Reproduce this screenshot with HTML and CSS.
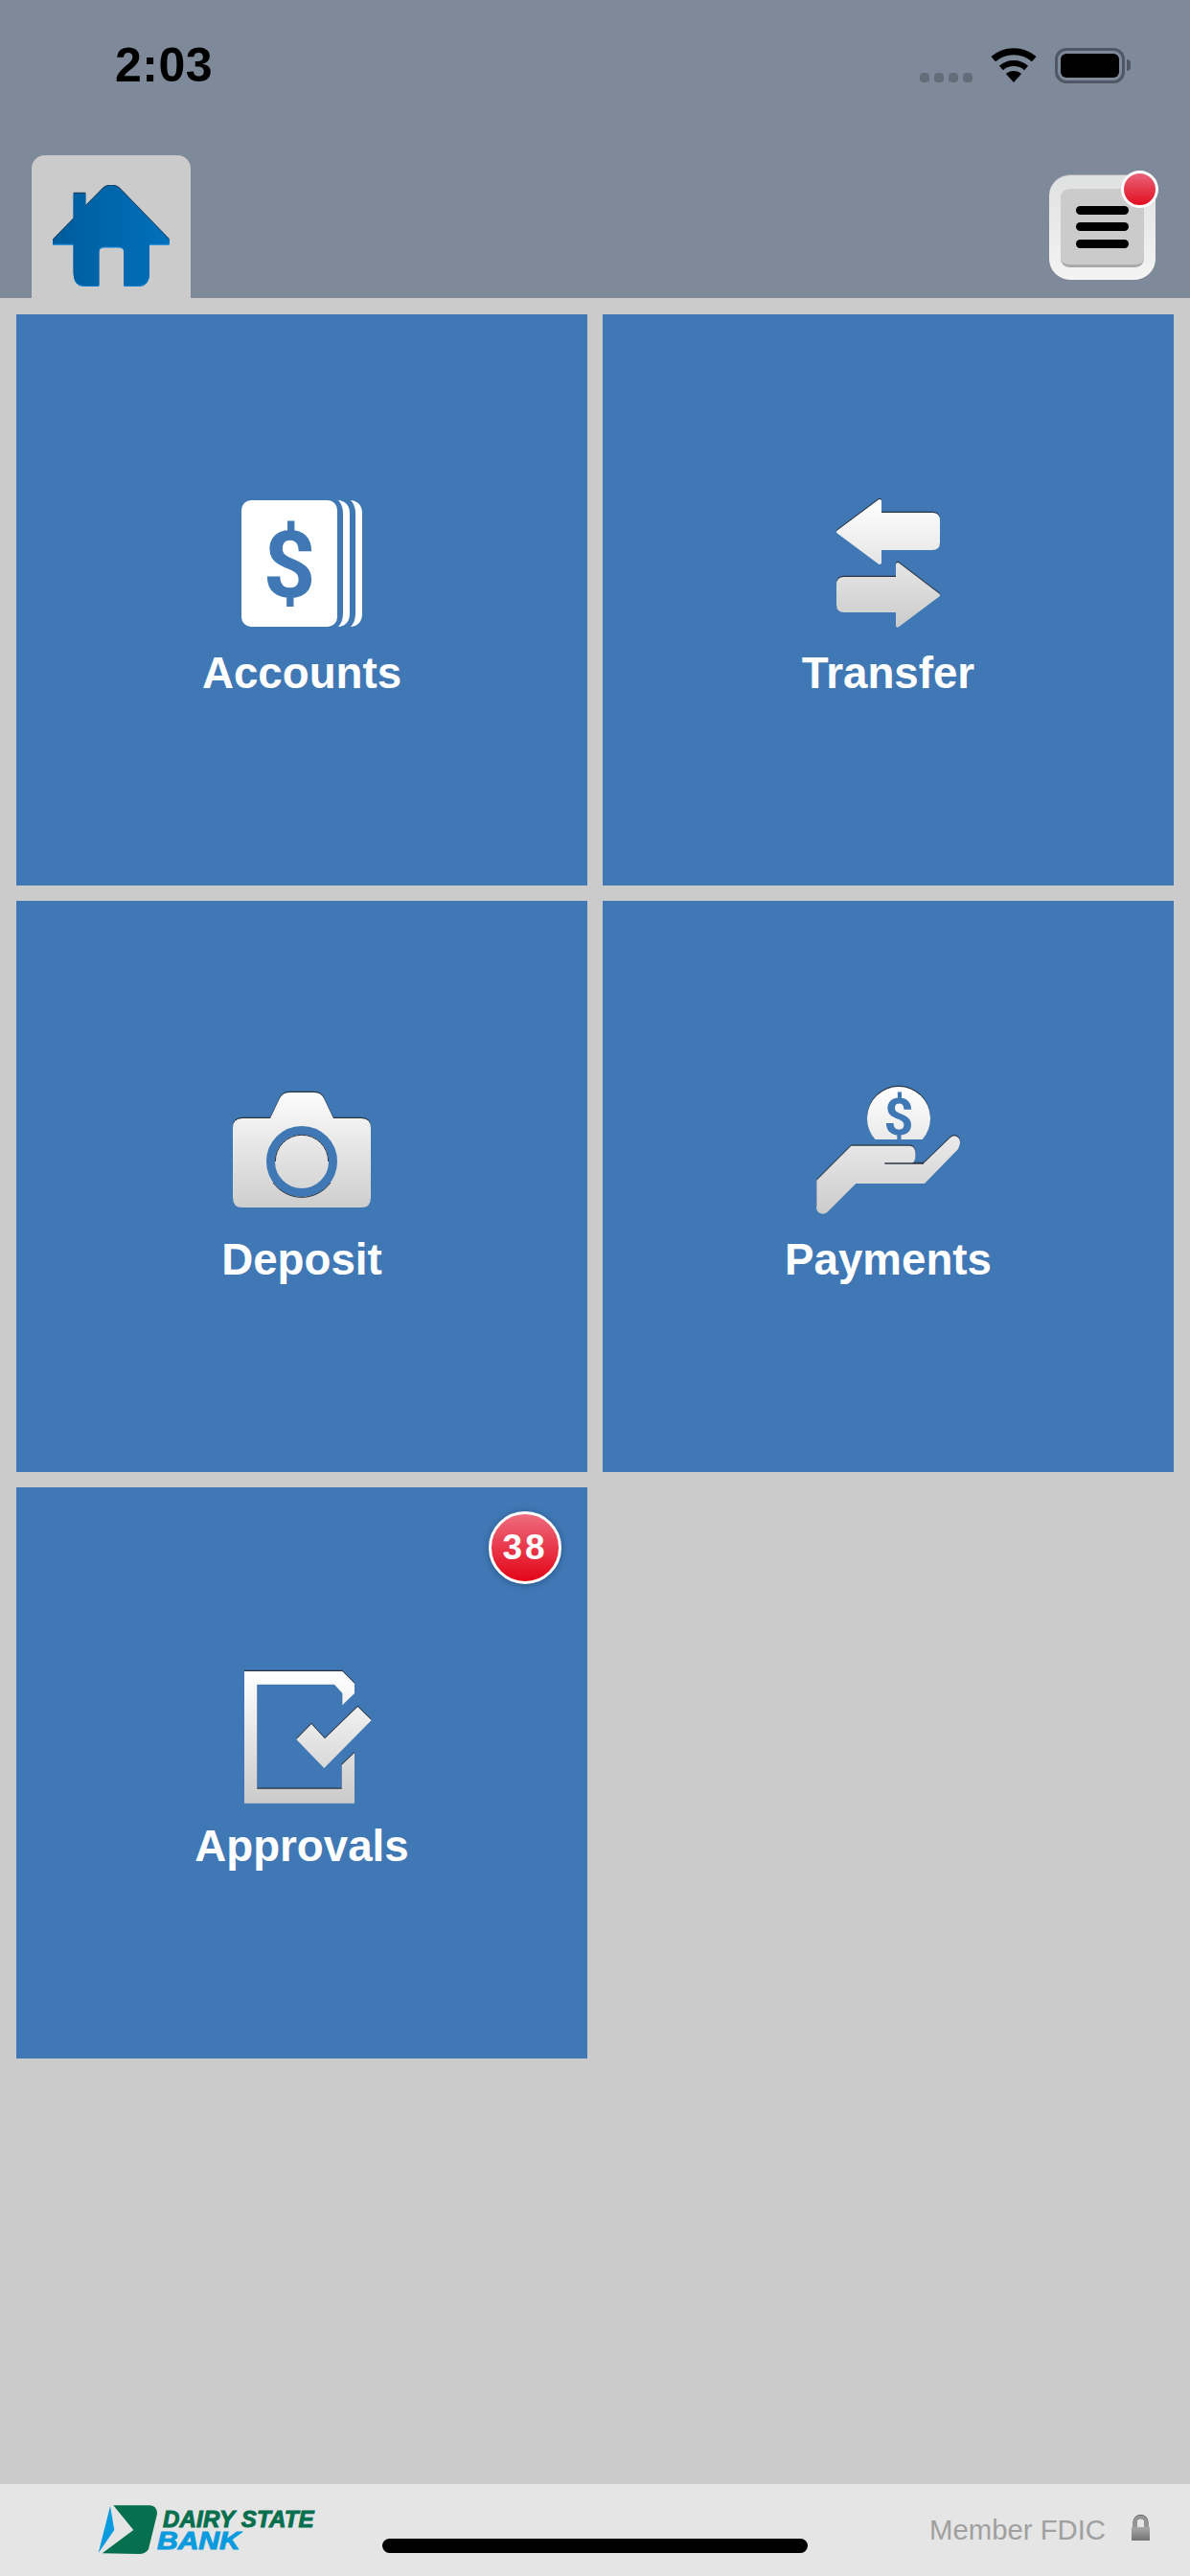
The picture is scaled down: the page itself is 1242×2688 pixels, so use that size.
FILE: index.html
```html
<!DOCTYPE html>
<html lang="en">
<head>
  <meta charset="UTF-8">
  <meta name="viewport" content="width=device-width, initial-scale=1.0">
  <title>Dairy State Bank</title>
  <link rel="stylesheet" href="styles.css">
</head>
<body>
  <header class="top">
    <div class="status">
      <span class="time">2:03</span>
      <div class="status-icons">
        <div class="signal"><i></i><i></i><i></i><i></i></div>
        <svg class="wifi" width="48" height="37" viewBox="0 0 48 37">
          <path d="M2.7 11.7A32.5 32.5 0 0 1 45.3 11.7" fill="none" stroke="#000" stroke-width="7"/>
          <path d="M10.9 21A20 20 0 0 1 37.1 21" fill="none" stroke="#000" stroke-width="6"/>
          <path d="M24 36L15.9 27.1A12 12 0 0 1 32.1 27.1Z" fill="#000"/>
        </svg>
        <div class="battery"><div class="battery-level"></div></div>
      </div>
    </div>
    <nav class="nav">
      <div class="home-tab">
        <svg width="122" height="106" viewBox="0 0 122 106">
          <defs>
            <linearGradient id="homeBlue" x1="0" y1="0" x2="1" y2="0">
              <stop offset="0" stop-color="#005c9c"/>
              <stop offset="1" stop-color="#0070bb"/>
            </linearGradient>
            <path id="house" d="M0 57.5L21.7 35.3V8.7H34.3V22L52.3 3.7Q61 -3 70 3.7L121.7 57V61.5H101V92Q101 105 88.3 105H74.3V69Q74.3 64.3 68.3 64.3H54.3Q48.3 64.3 48.3 69V105H34.3Q21.7 105 21.7 92V61.5H0Z"/>
          </defs>
          <use href="#house" fill="#1c3550" y="-1"/>
          <use href="#house" fill="#0a7fd2" y="1.2"/>
          <use href="#house" fill="url(#homeBlue)"/>
        </svg>
      </div>
      <button class="menu-btn">
        <span class="menu-inner"><i></i><i></i><i></i></span>
        <span class="menu-dot"></span>
      </button>
    </nav>
  </header>

  <main class="tiles">
    <a class="tile">
      <svg class="tile-icon" width="160" height="160" viewBox="0 0 160 160">
        <path d="M118 6H119Q130 8 130 20V124Q130 136 119 138H118Q123 133 123 124V20Q123 11 118 6Z" fill="#fff"/>
        <path d="M131 6H132Q143 8 143 20V124Q143 136 132 138H131Q136 133 136 124V20Q136 11 131 6Z" fill="#fff"/>
        <rect x="17" y="6" width="100" height="132" rx="10" fill="#fff"/>
        <text class="icon-dollar" x="67" y="107" font-size="96" text-anchor="middle">$</text>
      </svg>
      <span class="tile-label">Accounts</span>
    </a>

    <a class="tile">
      <svg class="tile-icon" width="160" height="160" viewBox="0 0 160 160">
        <defs>
          <linearGradient id="metal" gradientUnits="userSpaceOnUse" x1="0" y1="5" x2="0" y2="140">
            <stop offset="0" stop-color="#ffffff"/>
            <stop offset="1" stop-color="#cbcbcb"/>
          </linearGradient>
          <path id="arrows" d="M28 39L71 7V21H126Q132 21 132 27V50Q132 56 126 56H71V71ZM28 94Q28 88 34 88H90V73L132 105L90 136.5V121H34Q28 121 28 115Z" stroke-linejoin="round" stroke-width="4"/>
        </defs>
        <use href="#arrows" fill="#2b3440" stroke="#2b3440" y="-1.2"/>
        <use href="#arrows" fill="url(#metal)" stroke="url(#metal)"/>
      </svg>
      <span class="tile-label">Transfer</span>
    </a>

    <a class="tile">
      <svg class="tile-icon" width="160" height="160" viewBox="0 0 160 160">
        <defs>
          <path id="camera" d="M18 39H47L57 18Q60 12 67 12H93Q100 12 103 18L113 39H142Q152 39 152 49V122Q152 132 142 132H18Q8 132 8 122V49Q8 39 18 39Z"/>
        </defs>
        <use href="#camera" fill="#2b3440" y="-1.2"/>
        <use href="#camera" fill="url(#metal)"/>
        <circle cx="80" cy="84" r="32.5" fill="none" stroke="#3f78b5" stroke-width="9"/>
        <path d="M52.3 84A27.7 27.7 0 0 1 107.7 84" fill="none" stroke="#2b3440" stroke-width="1"/>
        <path d="M50 106A37 37 0 0 0 110 106" fill="none" stroke="#2b3440" stroke-width="1"/>
      </svg>
      <span class="tile-label">Deposit</span>
    </a>

    <a class="tile">
      <svg class="tile-icon" width="160" height="160" viewBox="0 0 160 160">
        <defs>
          <path id="coin" d="M66.4 61A33 33 0 1 1 115.6 61Z"/>
          <path id="hand" d="M41.3 67.7H103Q108.5 68 108.5 77T103 86H117L144.7 59.3Q149 55.5 153 59T153 71L118 107H46.3L16.3 137Q12 140 8 137.5T5.3 130V103.7Z"/>
        </defs>
        <use href="#coin" fill="#2b3440" y="-1.2"/>
        <use href="#coin" fill="url(#metal)"/>
        <text class="icon-dollar" x="91" y="56" font-size="54" text-anchor="middle">$</text>
        <use href="#hand" fill="#2b3440" y="-1.2"/>
        <use href="#hand" fill="url(#metal)"/>
        <path d="M76.3 86H117" fill="none" stroke="#2b3440" stroke-width="1.3"/>
      </svg>
      <span class="tile-label">Payments</span>
    </a>

    <a class="tile">
      <span class="count-badge">38</span>
      <svg class="tile-icon" width="160" height="160" viewBox="0 0 160 160">
        <defs>
          <path id="approve" d="M20 4H122.3L135 16.7V27L122.3 39.3V26.7L114 17.7H33.3V126.7H121.7V101.7L135 89V141.7H20ZM138.3 41L152.7 55L103.3 105L74.3 75L90 59L104 74.3Z"/>
        </defs>
        <use href="#approve" fill="#2b3440" y="-1.2"/>
        <use href="#approve" fill="url(#metal)"/>
      </svg>
      <span class="tile-label">Approvals</span>
    </a>
  </main>

  <footer class="bottom">
    <div class="logo">
      <svg width="64" height="54" viewBox="0 0 64 54">
        <path d="M16.3 1.3H54.7Q62 2 62 10.3L53 47Q50 52 43 52L4.7 51.3L37.3 27Z" fill="#056f4e"/>
        <path d="M13 2L0.7 51L17.3 27Z" fill="#0a9ade"/>
      </svg>
      <div class="logo-text">
        <span class="logo-top">DAIRY STATE</span>
        <span class="logo-bank">BANK</span>
      </div>
    </div>
    <div class="fdic">
      <span>Member FDIC</span>
      <svg class="lock" width="19" height="27" viewBox="0 0 19 27">
        <defs>
          <linearGradient id="lockGrey" x1="0" y1="0" x2="0" y2="1">
            <stop offset="0" stop-color="#a8a8a8"/>
            <stop offset="1" stop-color="#747474"/>
          </linearGradient>
        </defs>
        <path d="M3.5 13V8A6 6 0 0 1 15.5 8V13" fill="none" stroke="#3c3c3c" stroke-width="4"/>
        <path d="M3.5 13V8.5A6 6 0 0 1 15.5 8.5V13" fill="none" stroke="#959595" stroke-width="4"/>
        <rect x="0" y="13" width="19" height="14" fill="url(#lockGrey)"/>
      </svg>
    </div>
    <div class="home-bar"></div>
  </footer>
</body>
</html>
```

FILE: styles.css
```css
* {
  box-sizing: border-box;
}
body {
  margin: 0;
  height: 100vh;
  display: flex;
  flex-direction: column;
  font-family: "Liberation Sans", Arial, sans-serif;
  background-color: #cbcbcb;
}

/* top bar */
.top {
  height: 311px;
  flex: none;
  display: flex;
  flex-direction: column;
  justify-content: space-between;
  background-color: #7e8999;
}
.status {
  display: flex;
  justify-content: space-between;
  padding: 49px 68px 0 120px;
}
.time {
  font-size: 50px;
  font-weight: 700;
  letter-spacing: 0.5px;
  line-height: 38px;
  color: #000;
}
.status-icons {
  display: flex;
  align-items: flex-end;
  gap: 19px;
}
.signal {
  display: flex;
  gap: 5px;
  padding-bottom: 1px;
}
.signal i {
  width: 10px;
  height: 10px;
  border-radius: 4px;
  background-color: #636c79;
}
.battery {
  position: relative;
  width: 73px;
  height: 37px;
  padding: 3px;
  border: 3px solid #4f5764;
  border-radius: 12px;
}
.battery::after {
  content: "";
  position: absolute;
  top: 9px;
  right: -9px;
  width: 4px;
  height: 12px;
  border-radius: 0 6px 6px 0;
  background-color: #4f5764;
}
.battery-level {
  height: 100%;
  border-radius: 6px;
  background-color: #000;
}
.nav {
  display: flex;
  justify-content: space-between;
  align-items: flex-end;
  padding: 0 36px 0 33px;
}
.home-tab {
  width: 166px;
  height: 149px;
  display: flex;
  justify-content: center;
  padding-top: 31px;
  border-radius: 14px 14px 0 0;
  background-color: #cbcbcb;
}
.menu-btn {
  position: relative;
  width: 111px;
  height: 110px;
  margin-bottom: 19px;
  padding: 14px 12px 13px;
  border: none;
  border-top: 1px solid #a9adb1;
  border-radius: 22px;
  background: linear-gradient(#dfe0e0, #f4f4f4);
}
.menu-inner {
  height: 100%;
  display: flex;
  flex-direction: column;
  align-items: center;
  justify-content: center;
  gap: 8.5px;
  border-bottom: 3px solid #aaa;
  border-radius: 9px;
  background-color: #cbcbcb;
}
.menu-inner i {
  width: 55px;
  height: 9px;
  border-radius: 5px;
  background-color: #000;
}
.menu-dot {
  position: absolute;
  top: -5px;
  right: -3px;
  width: 39px;
  height: 39px;
  border: 3px solid #fff;
  border-radius: 50%;
  background: linear-gradient(#e96277, #e30f20);
}

/* tile grid */
.tiles {
  flex: 1;
  display: grid;
  grid-template-columns: 596px 596px;
  grid-auto-rows: 596px;
  gap: 16px;
  padding: 17px;
}
.tile {
  position: relative;
  display: flex;
  flex-direction: column;
  align-items: center;
  justify-content: center;
  padding-bottom: 7px;
  background-color: #3f78b5;
}
.tile-label {
  margin-top: 1px;
  font-size: 45.7px;
  font-weight: 700;
  line-height: 52px;
  color: #fff;
}
.icon-dollar {
  font-family: Roboto, sans-serif;
  font-weight: 700;
  fill: #3f78b5;
}
.count-badge {
  position: absolute;
  top: 25px;
  right: 27px;
  width: 76px;
  height: 76px;
  display: flex;
  align-items: center;
  justify-content: center;
  border: 3px solid #fff;
  border-radius: 50%;
  font-size: 37px;
  font-weight: 700;
  letter-spacing: 3px;
  color: #fff;
  background: linear-gradient(#ee6c7e, #e30417);
  box-shadow: 0 1px 6px rgba(20, 50, 90, 0.5);
}

/* footer */
.bottom {
  position: relative;
  height: 96px;
  flex: none;
  display: flex;
  justify-content: space-between;
  align-items: center;
  padding: 0 42px 0 102px;
  background-color: #e5e5e5;
}
.logo {
  display: flex;
  align-items: center;
  gap: 4px;
}
.logo-text {
  display: flex;
  flex-direction: column;
  font-style: italic;
  font-weight: 700;
  line-height: 22px;
}
.logo-top {
  font-size: 24px;
  letter-spacing: 0.2px;
  color: #056f4e;
  -webkit-text-stroke: 1px #056f4e;
}
.logo-bank {
  margin-left: -6px;
  font-size: 25px;
  transform: scaleX(1.2);
  transform-origin: left;
  color: #0a9ade;
  -webkit-text-stroke: 1px #0a9ade;
}
.fdic {
  display: flex;
  align-items: center;
  gap: 27px;
  font-size: 29.3px;
  color: #a0a0a0;
}
.lock {
  margin-bottom: 6px;
}
.home-bar {
  position: absolute;
  left: 399px;
  bottom: 24px;
  width: 444px;
  height: 15px;
  border-radius: 8px;
  background-color: #000;
}
```
